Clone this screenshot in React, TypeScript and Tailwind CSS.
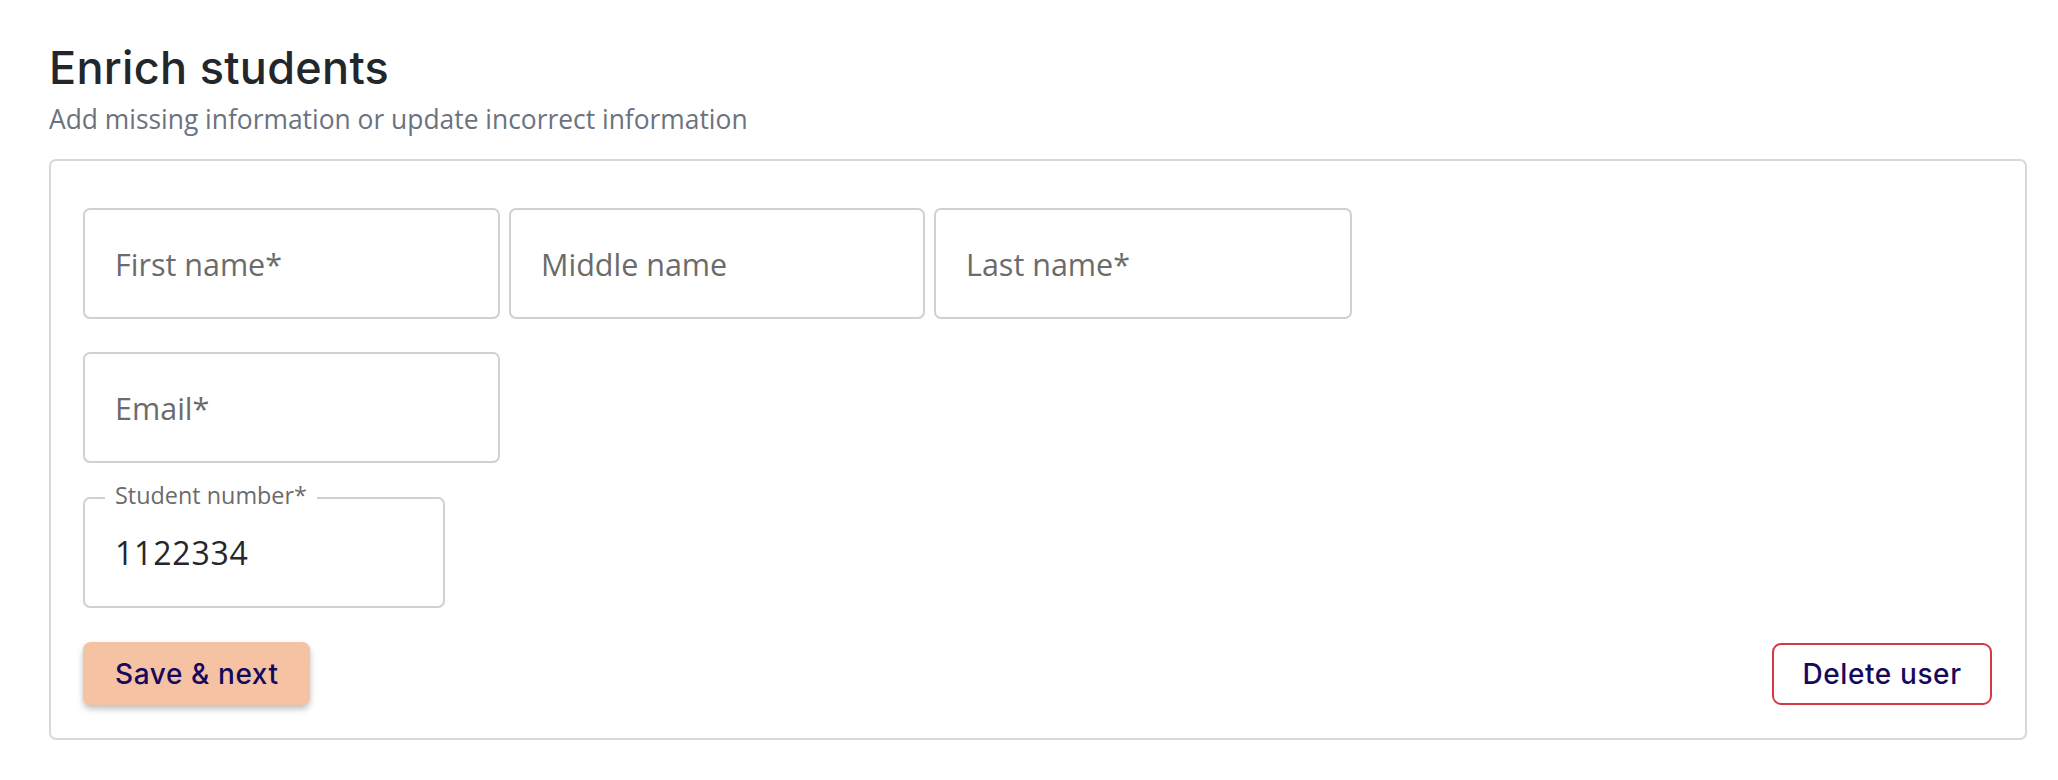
import React from "react";

const body = { fontFamily: '"Open Sans", "Noto Sans", sans-serif' };
const head = { fontFamily: 'Inter, "Noto Sans", sans-serif' };

function Field({ label, width }: { label: string; width: string }) {
  return (
    <div
      className={`${width} h-[111px] shrink-0 rounded-[7px] border-2 border-[#d0d0d0] bg-white flex items-center pl-[30px]`}
    >
      <span className="text-[30.5px] text-[#6b6b6b] leading-none" style={body}>
        {label}
      </span>
    </div>
  );
}

export default function App() {
  return (
    <div className="min-h-[780px] bg-white pl-[49px] pr-[31px] pt-[45px]">
      <h1 className="text-[45px] font-medium leading-none text-[#23262b] tracking-[0.3px]" style={head}>
        Enrich students
      </h1>
      <p className="mt-[16px] text-[26.4px] leading-none text-[#6b7280]" style={body}>
        Add missing information or update incorrect information
      </p>
      <div className="mt-[27px] w-[1978px] rounded-[7px] border-2 border-[#d5d8dc] pl-[32px] pr-[33px] pt-[47px] pb-[33px]">
        <div className="flex gap-[9px]">
          <Field label="First name*" width="w-[417px]" />
          <Field label="Middle name" width="w-[416px]" />
          <Field label="Last name*" width="w-[418px]" />
        </div>
        <div className="mt-[33px] flex">
          <Field label="Email*" width="w-[417px]" />
        </div>
        <div className="relative mt-[34px] w-[362px] h-[111px] rounded-[7px] border-2 border-[#d0d0d0] flex items-center pl-[30px]">
          <span
            className="absolute left-[20px] top-[-15px] bg-white px-[10px] text-[23.4px] leading-none text-[#6b6b6b]"
            style={body}
          >
            Student number*
          </span>
          <span className="text-[32px] leading-none text-[#24262a] tracking-[0.8px]" style={body}>
            1122334
          </span>
        </div>
        <div className="mt-[34px] flex items-center justify-between">
          <button
            className="h-[63px] w-[227px] rounded-[8px] bg-[#f5c2a4] text-[28px] font-medium text-[#16095c] tracking-[0.6px] shadow-[0_4px_6px_rgba(0,0,0,0.25)] pl-[32px] text-left"
            style={head}
          >
            Save &amp; next
          </button>
          <button
            className="h-[62px] w-[220px] rounded-[9px] border-2 border-[#d33b44] bg-white text-[28px] font-medium text-[#16095c] tracking-[0.6px]"
            style={head}
          >
            Delete user
          </button>
        </div>
      </div>
    </div>
  );
}
